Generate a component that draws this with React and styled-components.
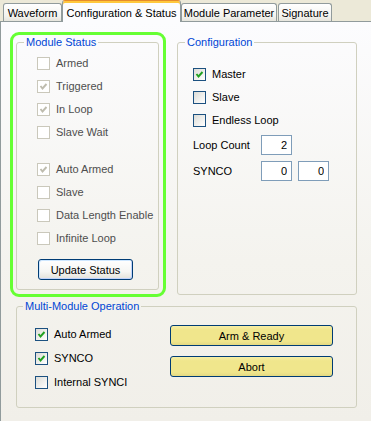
import React from "react";
import styled, { createGlobalStyle, css } from "styled-components";

const Global = createGlobalStyle`
  html, body { margin: 0; padding: 0; }
  body {
    background: #ECE9D8;
    font-family: "Liberation Sans", Arial, sans-serif;
    font-size: 11px;
    color: #000;
    width: 371px;
    height: 421px;
    overflow: hidden;
  }
`;

const Window = styled.div`
  width: 371px;
  height: 421px;
  display: flex;
  flex-direction: column;
`;

const TabStrip = styled.div`
  height: 21px;
  display: flex;
  align-items: flex-end;
  padding-left: 3px;
  position: relative;
  z-index: 1;
`;

const Tab = styled.div`
  box-sizing: border-box;
  width: ${(p) => p.$w}px;
  margin-left: ${(p) => p.$ml || 0}px;
  height: 18px;
  border: 1px solid #919B9C;
  border-bottom: none;
  border-radius: 3px 3px 0 0;
  background: linear-gradient(#FFFFFF, #F3F3EF 70%, #E6E5DD);
  display: flex;
  align-items: center;
  justify-content: center;
  white-space: nowrap;
  padding-top: 1px;
  ${(p) =>
    p.$active &&
    css`
      height: 22px;
      margin-bottom: -1px;
      background: #FCFCFE;
      border-top: 1px solid #E68B2C;
      box-shadow: inset 0 2px 0 #FFC83C;
      padding-top: 2px;
    `}
`;

const Panel = styled.div`
  box-sizing: border-box;
  flex: 1;
  border-left: 1px solid #919B9C;
  border-top: 1px solid #919B9C;
  background: linear-gradient(#FCFCFE, #F4F3EE 60%, #F1EFE9);
  padding: 10px 0 0 9px;
  display: flex;
  flex-direction: column;
`;

const TopRow = styled.div`
  display: flex;
  align-items: flex-start;
  gap: 11px;
`;

const Highlight = styled.div`
  box-sizing: border-box;
  width: 156px;
  border: 3px solid #66FF33;
  border-radius: 9px;
  padding: 1px 4px 4px 3px;
`;

const Group = styled.fieldset`
  box-sizing: border-box;
  margin: 0;
  padding: 0;
  min-width: 0;
  width: ${(p) => p.$w}px;
  ${(p) => p.$h && css`height: ${p.$h}px;`}
  border: 1px solid #D0D0BF;
  border-radius: 3px;
`;

const Legend = styled.legend`
  margin-left: ${(p) => p.$ml ?? 7}px;
  padding: 0 2px;
  line-height: 13px;
  color: #0046D5;
  white-space: nowrap;
`;

const GroupBody = styled.div`
  display: flex;
  flex-direction: column;
  padding: ${(p) => p.$pad};
`;

const CheckList = styled.div`
  display: flex;
  flex-direction: column;
  gap: ${(p) => p.$gap || 10}px;
  margin-top: ${(p) => p.$mt || 0}px;
`;

const CheckRow = styled.label`
  display: flex;
  align-items: center;
  gap: 6px;
  height: 13px;
  line-height: 13px;
  white-space: nowrap;
  color: ${(p) => (p.$disabled ? "#4E4E4E" : "#000")};
`;

const Box = styled.span`
  box-sizing: border-box;
  width: 13px;
  height: 13px;
  flex: none;
  display: flex;
  align-items: center;
  justify-content: center;
  border: 1px solid ${(p) => (p.$disabled ? "#CAC8BB" : "#1C5180")};
  background: ${(p) =>
    p.$disabled ? "#FFFFFF" : "linear-gradient(135deg, #DCDCD7, #F5F5F3 70%, #FFFFFF)"};
`;

const Check = ({ checked, disabled, children }) => (
  <CheckRow $disabled={disabled}>
    <Box $disabled={disabled}>
      {checked && (
        <svg width="11" height="11" viewBox="0 0 11 11">
          <polyline
            points="2.5,5 4.5,7.5 8.5,3"
            fill="none"
            stroke={disabled ? "#BEBCAE" : "#21A121"}
            strokeWidth="1.9"
          />
        </svg>
      )}
    </Box>
    {children}
  </CheckRow>
);

const Button = styled.button`
  box-sizing: border-box;
  width: ${(p) => p.$w}px;
  height: 21px;
  margin: 0;
  padding: 0;
  font-family: inherit;
  font-size: 11px;
  color: #000;
  border: 1px solid #003C74;
  border-radius: 3px;
  background: ${(p) =>
    p.$yellow
      ? "linear-gradient(#F6EEA6, #F0E68C 20%, #F0E68C 80%, #E3D983)"
      : "linear-gradient(#FFFFFF, #F6F6F3 60%, #E3E2DA)"};
  box-shadow: ${(p) =>
    p.$yellow ? "none" : "inset -1px -1px 0 #C1D3FB, inset 1px 1px 0 #CEE7FF"};
`;

const StatusButton = styled(Button)`
  margin: 14px 0 0 1px;
`;

const FieldRow = styled.div`
  display: flex;
  align-items: center;
  height: 20px;
  margin-top: ${(p) => p.$mt || 0}px;
  gap: 6px;
`;

const FieldLabel = styled.span`
  width: 62px;
  white-space: nowrap;
`;

const NumInput = styled.input`
  box-sizing: border-box;
  width: 31px;
  height: 20px;
  margin: 0;
  border: 1px solid #7F9DB9;
  background: #FFF;
  font-family: inherit;
  font-size: 11px;
  text-align: right;
  padding: 0 4px 0 0;
  color: #000;
`;

const MultiWrap = styled.div`
  margin: 3px 0 0 6px;
`;

const MultiBody = styled.div`
  display: flex;
  padding: 12px 0 0 18px;
`;

const LeftCol = styled.div`
  width: 135px;
  padding-top: 3px;
`;

const ButtonCol = styled.div`
  display: flex;
  flex-direction: column;
  gap: 10px;
`;

const ConfigCol = styled.div`
  margin-top: 4px;
`;

export default function App() {
  return (
    <>
      <Global />
      <Window>
        <TabStrip>
          <Tab $w={59}>Waveform</Tab>
          <Tab $w={119} $active>Configuration &amp; Status</Tab>
          <Tab $w={96}>Module Parameter</Tab>
          <Tab $w={54} $ml={1}>Signature</Tab>
        </TabStrip>
        <Panel>
          <TopRow>
            <Highlight>
              <Group $w={143}>
                <Legend>Module Status</Legend>
                <GroupBody $pad="8px 0 9px 20px">
                  <CheckList>
                    <Check disabled>Armed</Check>
                    <Check disabled checked>Triggered</Check>
                    <Check disabled checked>In Loop</Check>
                    <Check disabled>Slave Wait</Check>
                  </CheckList>
                  <CheckList $mt={24}>
                    <Check disabled checked>Auto Armed</Check>
                    <Check disabled>Slave</Check>
                    <Check disabled>Data Length Enable</Check>
                    <Check disabled>Infinite Loop</Check>
                  </CheckList>
                  <StatusButton $w={95}>Update Status</StatusButton>
                </GroupBody>
              </Group>
            </Highlight>
            <ConfigCol>
              <Group $w={180} $h={259}>
                <Legend>Configuration</Legend>
                <GroupBody $pad="19px 0 0 15px">
                  <CheckList>
                    <Check checked>Master</Check>
                    <Check>Slave</Check>
                    <Check>Endless Loop</Check>
                  </CheckList>
                  <FieldRow $mt={8}>
                    <FieldLabel>Loop Count</FieldLabel>
                    <NumInput readOnly value="2" />
                  </FieldRow>
                  <FieldRow $mt={6}>
                    <FieldLabel>SYNCO</FieldLabel>
                    <NumInput readOnly value="0" />
                    <NumInput readOnly value="0" />
                  </FieldRow>
                </GroupBody>
              </Group>
            </ConfigCol>
          </TopRow>
          <MultiWrap>
            <Group $w={341} $h={108}>
              <Legend $ml={6}>Multi-Module Operation</Legend>
              <MultiBody>
                <LeftCol>
                  <CheckList $gap={11}>
                    <Check checked>Auto Armed</Check>
                    <Check checked>SYNCO</Check>
                    <Check>Internal SYNCI</Check>
                  </CheckList>
                </LeftCol>
                <ButtonCol>
                  <Button $w={163} $yellow>Arm &amp; Ready</Button>
                  <Button $w={163} $yellow>Abort</Button>
                </ButtonCol>
              </MultiBody>
            </Group>
          </MultiWrap>
        </Panel>
      </Window>
    </>
  );
}
